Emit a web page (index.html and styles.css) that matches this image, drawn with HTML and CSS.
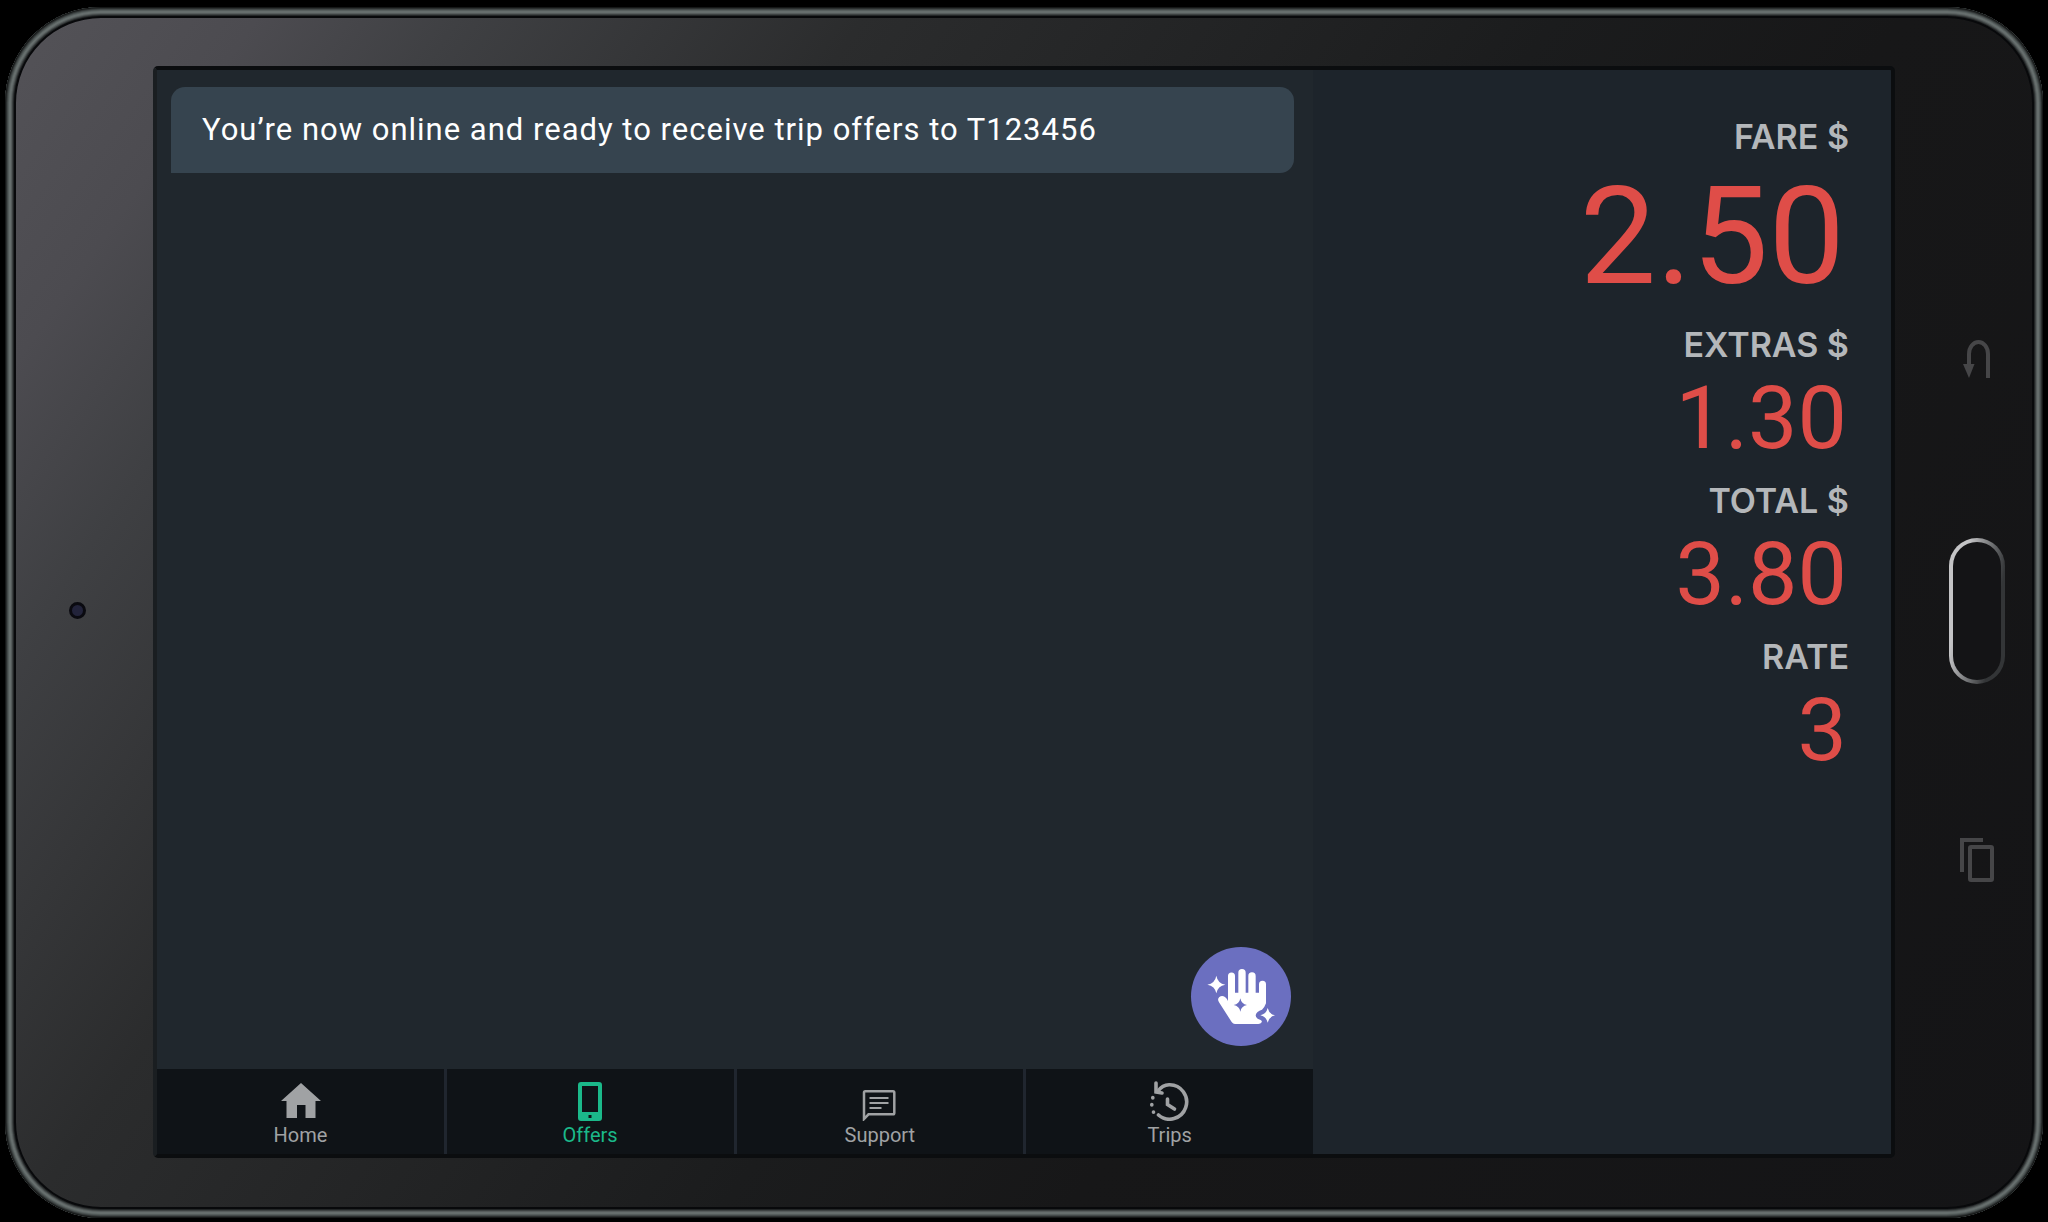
FILE: index.html
```
<!DOCTYPE html>
<html lang="en">
<head>
  <meta charset="UTF-8">
  <title>Driver Tablet - Offers</title>
  <link rel="stylesheet" href="styles.css">
</head>
<body>

<div class="device">
  <div class="bezel bezel-left">
    <span class="camera"></span>
  </div>

  <div class="screen">
    <main class="main">
      <div class="content">
        <div class="toast" role="status">You’re now online and ready to receive trip offers to T123456</div>
        <button class="hail" aria-label="Street hail">
          <svg viewBox="92 81 300 297" fill="#fff">
            <path d="M203 168a10.500 10.500 0 0 1 21 0V218H234V158a11 11 0 0 1 22 0V218H264V168a11 11 0 0 1 22 0V218H296V193a10.500 10.500 0 0 1 21 0V250Q313 262 305 269Q288 274 286 286Q287 296 301 300Q306 303 304 307Q301 312 294 312H224Q218 312 214 306L176 247Q170 237 177 231Q185 225 194 231Q200 235 203 243Z"/>
            <path d="M168 167Q172 190 195 194Q172 198 168 220Q164 198 141 194Q164 190 168 167Z"/>
            <path d="M322 264Q326 282 344 286Q326 290 322 308Q318 290 300 286Q318 282 322 264Z"/>
            <path class="spark" d="M240 235Q243 252 260 255Q243 258 240 275Q237 258 220 255Q237 252 240 235Z"/>
          </svg>
        </button>
      </div>

      <nav class="tabs">
        <a class="tab" href="#home">
          <svg viewBox="0 0 42 40" fill="currentColor"><path d="M22 2L42 20H36.500V37H26.500V24H18V37H7.500V20H2Z"/></svg>
          Home
        </a>
        <a class="tab active" href="#offers">
          <svg viewBox="0 0 42 40" fill="currentColor"><path fill-rule="evenodd" d="M12 1H30Q33 1 33 4V37Q33 40 30 40H12Q9 40 9 37V4Q9 1 12 1ZM13 5V31H29V5ZM19.500 34V37H22.500V34Z"/></svg>
          Offers
        </a>
        <a class="tab" href="#support">
          <svg viewBox="0 0 42 40" fill="none" stroke="currentColor" stroke-width="2.500"><path d="M5 38V11.500Q5 10.200 6.300 10.200H34Q35.300 10.200 35.300 11.500V32Q35.300 33.300 34 33.300H9.500Z"/><path d="M10.500 17H29.500M10.500 22H29.500M10.500 27H22.500" stroke-width="2.200"/></svg>
          Support
        </a>
        <a class="tab" href="#trips">
          <svg viewBox="0 0 42 40" fill="none" stroke="currentColor" stroke-width="3.600" stroke-linecap="round"><path d="M9 10Q13.500 4 20 3.800A17 17.200 0 1 1 9.500 34"/><path d="M7 2V11L13 12M18.500 18V23.500L25.500 28"/><path d="M3.800 16.500V17M2.800 23.500V24M4.500 31V31.200"/></svg>
          Trips
        </a>
      </nav>
    </main>

    <aside class="meter">
      <dl>
        <dt>FARE $</dt>
        <dd class="fare">2.50</dd>
        <dt>EXTRAS $</dt>
        <dd>1.30</dd>
        <dt>TOTAL $</dt>
        <dd>3.80</dd>
        <dt>RATE</dt>
        <dd>3</dd>
      </dl>
    </aside>
  </div>

  <div class="bezel bezel-right">
    <button class="key" aria-label="Back">
      <svg viewBox="0 0 48 48" fill="none" stroke="#464648" stroke-width="4"><path d="M16 26V14A9.500 12 0 0 1 35 14V38"/><path d="M10 24H21.500L16 38Z" fill="#464648" stroke="none"/></svg>
    </button>
    <button class="home-key" aria-label="Home button"></button>
    <button class="key" aria-label="Recent apps">
      <svg viewBox="0 0 48 48" fill="none" stroke="#464648" stroke-width="4"><path d="M9 38V6H30"/><rect x="17" y="13" width="22" height="33" rx="1"/></svg>
    </button>
  </div>
</div>

</body>
</html>
```
FILE: styles.css
```
* {
  box-sizing: border-box;
}
body {
  margin: 0;
  padding: 7px 5px 4px;
  min-height: 100vh;
  display: flex;
  background: #000;
  font-family: Roboto, sans-serif;
}
button {
  padding: 0;
  border: none;
  background: none;
  cursor: pointer;
}
svg {
  display: block;
}

/* Tablet body */
.device {
  flex: 1;
  display: flex;
  padding: 59px 0 60px;
  border-radius: 96px;
  background: linear-gradient(125deg, #545358 0%, #4c4b50 9%, #3f4043 16%, #2b2c2d 30%, #1b1c1d 54%, #171718 66%, #141416 100%);
  box-shadow:
    inset 0 0 0 1px #151717,
    inset 0 0 0 2px #2b2f2f,
    inset 0 0 0 3px #434949,
    inset 0 0 0 4px #565e5d,
    inset 0 0 0 6px #666e6d,
    inset 0 0 0 7px #565c5c,
    inset 0 0 0 8px #3c4141,
    inset 0 0 0 9px #222526,
    inset 0 0 0 11px #08090b;
}
.bezel {
  width: 148px;
  display: flex;
  flex-direction: column;
  align-items: center;
  justify-content: center;
}
.bezel-left {
  padding: 0 4px 4px 0;
}
.bezel-right {
  gap: 150px;
  padding: 0 0 2px 16px;
}
.camera {
  width: 17px;
  height: 17px;
  border: 3px solid #0a0a10;
  border-radius: 50%;
  background: #22233a;
}
.key svg {
  width: 48px;
  height: 48px;
}
.home-key {
  width: 56px;
  height: 146px;
  border: 4px solid transparent;
  border-radius: 28px;
  background:
    linear-gradient(#141416, #141416) padding-box,
    linear-gradient(100deg, #c4c4c6 25%, #333537 75%) border-box;
}

/* Screen */
.screen {
  flex: 1;
  display: grid;
  grid-template-columns: 2fr 1fr;
  border: 4px solid #0b0d0f;
  border-left-color: #1a1e21;
  border-radius: 5px;
  background: #1d242b;
}
.main {
  display: flex;
  flex-direction: column;
}
.content {
  flex: 1;
  position: relative;
  padding: 17px 19px 22px 14px;
  background: #20272d;
}
.toast {
  padding: 23px 31px;
  border-radius: 14px 14px 14px 0;
  background: #36444f;
  color: #fff;
  font-size: 31px;
  line-height: 40px;
  letter-spacing: 1px;
}
.hail {
  position: absolute;
  right: 22px;
  bottom: 23px;
  width: 100px;
  height: 99px;
  border-radius: 50%;
  background: #6b6fc0;
}
.spark {
  fill: #6b6fc0;
}

/* Bottom tabs */
.tabs {
  display: grid;
  grid-template-columns: repeat(4, 1fr);
  gap: 3px;
  background: #20262f;
}
.tab {
  display: flex;
  flex-direction: column;
  align-items: center;
  gap: 2px;
  padding: 12px 0 7px;
  background: #0f1317;
  color: #a0a2a4;
  font-size: 20px;
  line-height: 24px;
  text-decoration: none;
}
.tab svg {
  width: 42px;
  height: 40px;
}
.tab.active {
  color: #1bb98a;
}

/* Taxi meter */
.meter {
  padding: 45px 42px 0;
  text-align: right;
}
.meter dl {
  margin: 0;
}
.meter dt {
  color: #b4b7ba;
  font-family: Inter, sans-serif;
  font-size: 34px;
  font-weight: 600;
  line-height: 44px;
}
.meter dd {
  margin: 0;
  padding: 5px 2px 15px;
  color: #df4d48;
  font-size: 88px;
  line-height: 92px;
}
.meter .fare {
  padding: 0 4px 8px;
  font-size: 136px;
  line-height: 156px;
}
```
